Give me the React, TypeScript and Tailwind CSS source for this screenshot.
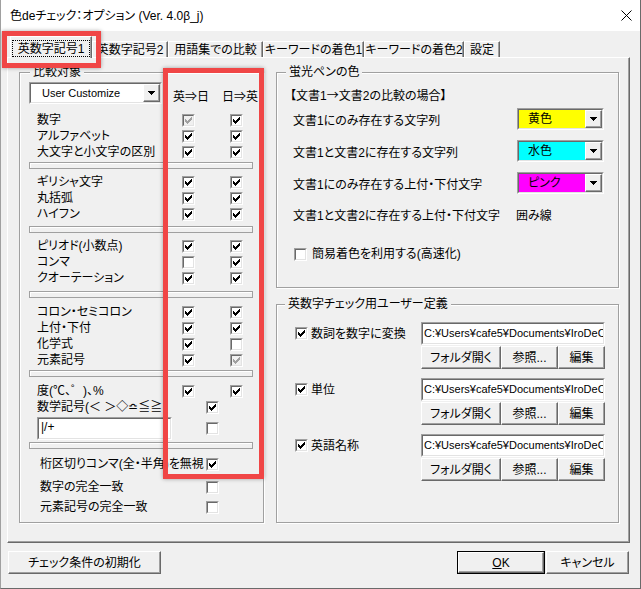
import React from "react";

type CS = "on" | "off" | "dis";

const CHECK_TOPS = [2, 3, 4, 3, 2, 1, 0];

function Check({ s }: { s: CS }) {
  return (
    <span className="inline-flex shrink-0 w-[13px] h-[13px] border border-t-[#a0a0a0] border-l-[#a0a0a0] border-r-white border-b-white">
      <span
        className={`flex flex-1 items-center justify-center border border-t-[#696969] border-l-[#696969] border-r-[#e3e3e3] border-b-[#e3e3e3] ${
          s === "dis" ? "bg-[#f0f0f0]" : "bg-white"
        }`}
      >
        {s !== "off" && (
          <svg width="7" height="7" viewBox="0 0 7 7" shapeRendering="crispEdges">
            {CHECK_TOPS.map((t, i) => (
              <rect key={i} x={i} y={t} width="1" height="3" fill={s === "dis" ? "#a0a0a0" : "#000"} />
            ))}
          </svg>
        )}
      </span>
    </span>
  );
}

function DropBtn() {
  return (
    <div className="w-[17px] flex items-center justify-center border border-t-white border-l-white border-r-[#696969] border-b-[#696969] shadow-[inset_-1px_-1px_0_#a0a0a0] bg-[#f0f0f0]">
      <svg width="7" height="4" viewBox="0 0 7 4" shapeRendering="crispEdges">
        <rect x="0" y="0" width="7" height="1" fill="#000" />
        <rect x="1" y="1" width="5" height="1" fill="#000" />
        <rect x="2" y="2" width="3" height="1" fill="#000" />
        <rect x="3" y="3" width="1" height="1" fill="#000" />
      </svg>
    </div>
  );
}

function Combo({ className, fill, pad, children }: { className: string; fill: string; pad: string; children: React.ReactNode }) {
  return (
    <div className={`flex h-[22px] border border-t-[#a0a0a0] border-l-[#a0a0a0] border-r-white border-b-white ${className}`}>
      <div className="flex flex-1 border border-t-[#696969] border-l-[#696969] border-r-[#e3e3e3] border-b-[#e3e3e3] bg-white">
        <div className={`flex-1 flex items-center whitespace-nowrap overflow-hidden ${pad} ${fill}`}>{children}</div>
        <DropBtn />
      </div>
    </div>
  );
}

function Field({ className, inner, children }: { className: string; inner: string; children: React.ReactNode }) {
  return (
    <div className={`border border-t-[#a0a0a0] border-l-[#a0a0a0] border-r-white border-b-white ${className}`}>
      <div
        className={`h-full border border-t-[#696969] border-l-[#696969] border-r-[#e3e3e3] border-b-[#e3e3e3] bg-white flex overflow-hidden whitespace-nowrap ${inner}`}
      >
        {children}
      </div>
    </div>
  );
}

function Btn({ className, children }: { className: string; children: React.ReactNode }) {
  return (
    <div
      className={`flex items-center justify-center h-[23px] border border-t-white border-l-white border-r-[#696969] border-b-[#696969] shadow-[inset_-1px_-1px_0_#a0a0a0] bg-[#f0f0f0] ${className}`}
    >
      {children}
    </div>
  );
}

function Group({ title, className, titleMl, children }: { title: string; className: string; titleMl: string; children: React.ReactNode }) {
  return (
    <div className={`flex flex-col shrink-0 border border-[#a0a0a0] shadow-[inset_1px_1px_0_#fff,1px_1px_0_#fff] ${className}`}>
      <div className={`-mt-[8px] ${titleMl} px-[3px] w-fit h-[14px] leading-[14px] bg-[#f0f0f0] whitespace-nowrap`}>{title}</div>
      {children}
    </div>
  );
}

function Sep({ mt }: { mt: string }) {
  return <div className={`ml-[9px] w-[224px] h-[7px] border border-[#a0a0a0] shadow-[inset_1px_1px_0_#fff] ${mt}`} />;
}

function Row2({ label, a, b, mt }: { label: string; a: CS; b: CS; mt: string }) {
  return (
    <div className={`flex items-center h-[16px] ${mt}`}>
      <span className="w-[162px] pl-[17px] leading-[14px] whitespace-nowrap overflow-hidden">{label}</span>
      <Check s={a} />
      <span className="ml-[35px] flex">
        <Check s={b} />
      </span>
    </div>
  );
}

function RowMid({ label, s, mt, pl, clip }: { label: string; s: CS; mt: string; pl: string; clip?: boolean }) {
  return (
    <div className={`flex items-center h-[16px] ${mt}`}>
      <span className={`w-[186px] ${pl} leading-[14px] whitespace-nowrap overflow-hidden`}>
        {clip ? <span className="block w-[126px] overflow-hidden">{label}</span> : label}
      </span>
      <Check s={s} />
    </div>
  );
}

function ColorRow({ label, fill, text, mt }: { label: string; fill: string; text: string; mt: string }) {
  return (
    <div className={`flex items-center h-[22px] ${mt}`}>
      <span className="w-[240px] pl-[16px] pt-[4px] leading-[14px] whitespace-nowrap">{label}</span>
      <Combo className="w-[87px]" fill={fill} pad="pl-[9px]">
        {text}
      </Combo>
    </div>
  );
}

function UserDef({ label, mt }: { label: string; mt: string }) {
  return (
    <div className={`flex ${mt}`}>
      <div className="w-[144px] h-[23px] flex items-center pl-[18px]">
        <Check s="on" />
        <span className="ml-[3px] leading-[14px] whitespace-nowrap">{label}</span>
      </div>
      <div className="w-[184px] flex flex-col">
        <Field className="h-[23px]" inner="items-center pl-[1px] text-[11px]">
          C:¥Users¥cafe5¥Documents¥IroDeCheck¥UserDefine¥
        </Field>
        <div className="flex mt-[1px]">
          <Btn className="w-[80px]">フォルダ開く</Btn>
          <Btn className="w-[57px]">参照...</Btn>
          <Btn className="w-[47px]">編集</Btn>
        </div>
      </div>
    </div>
  );
}

export default function App() {
  return (
    <div className="relative w-[641px] h-[589px] overflow-hidden bg-[#f0f0f0] border-l border-r border-b border-l-[#a0a0a0] border-r-[#6a6a6a] border-b-[#6a6a6a] flex flex-col text-black text-[12px] font-['Liberation_Sans','Noto_Sans_CJK_JP',sans-serif] [font-feature-settings:'palt']">
      {/* title bar */}
      <div className="h-[31px] shrink-0 bg-white flex items-center pl-[9px] pr-[8px]">
        <span className="leading-[16px] whitespace-nowrap">色deチェック：オプション (Ver. 4.0β_j)</span>
        <svg className="ml-auto" width="11" height="11" viewBox="0 0 11 11">
          <path d="M0.5 0.5L10.5 10.5M10.5 0.5L0.5 10.5" stroke="#000" strokeWidth="1" />
        </svg>
      </div>

      {/* tabs */}
      <div className="flex items-end h-[21px] mt-[5px] pl-[9px] shrink-0">
        <div className="relative z-10 -mb-px h-[22px] w-[82px] bg-[#f0f0f0] border-t border-l border-r border-t-white border-l-white border-r-[#696969] shadow-[inset_-1px_0_0_#a0a0a0] flex justify-center pt-[3px]">
          <div className="w-[78px] h-[17px] border border-dotted border-black flex items-center justify-center leading-[14px] whitespace-nowrap">
            英数字記号1
          </div>
        </div>
        <div className="h-[16px] w-[76px] border-t border-l border-r border-t-white border-l-white border-r-[#696969] shadow-[inset_-1px_0_0_#a0a0a0] flex items-center justify-center leading-[14px] whitespace-nowrap">
          英数字記号2
        </div>
        <div className="h-[16px] w-[95px] border-t border-l border-r border-t-white border-l-white border-r-[#696969] shadow-[inset_-1px_0_0_#a0a0a0] flex items-center justify-center leading-[14px] whitespace-nowrap">
          用語集での比較
        </div>
        <div className="h-[16px] w-[101px] border-t border-l border-r border-t-white border-l-white border-r-[#696969] shadow-[inset_-1px_0_0_#a0a0a0] flex items-center justify-center leading-[14px] whitespace-nowrap">
          キーワードの着色1
        </div>
        <div className="h-[16px] w-[100px] border-t border-l border-r border-t-white border-l-white border-r-[#696969] shadow-[inset_-1px_0_0_#a0a0a0] flex items-center justify-center leading-[14px] whitespace-nowrap">
          キーワードの着色2
        </div>
        <div className="h-[16px] w-[36px] border-t border-l border-r border-t-white border-l-white border-r-[#696969] shadow-[inset_-1px_0_0_#a0a0a0] flex items-center justify-center leading-[14px] whitespace-nowrap">
          設定
        </div>
      </div>

      {/* panel */}
      <div className="ml-[6px] w-[623px] h-[486px] shrink-0 border border-t-white border-l-white border-r-[#696969] border-b-[#696969] shadow-[inset_-1px_-1px_0_#a0a0a0] flex items-start pt-[14px] pl-[11px]">
        {/* left group */}
        <Group title="比較対象" className="w-[245px] h-[451px]" titleMl="ml-[10px]">
          <div className="flex items-end h-[22px] mt-[3px]">
            <div className="ml-[9px]">
              <Combo className="w-[133px]" fill="bg-white" pad="pl-[11px] text-[11px]">
                User Customize
              </Combo>
            </div>
            <span className="ml-[11px] leading-[14px] whitespace-nowrap">英⇒日</span>
            <span className="ml-[13px] leading-[14px] whitespace-nowrap">日⇒英</span>
          </div>

          <Row2 label="数字" a="dis" b="on" mt="mt-[8px]" />
          <Row2 label="アルファベット" a="on" b="on" mt="" />
          <Row2 label="大文字と小文字の区別" a="on" b="on" mt="" />
          <Sep mt="mt-[2px]" />
          <Row2 label="ギリシャ文字" a="on" b="on" mt="mt-[5px]" />
          <Row2 label="丸括弧" a="on" b="on" mt="" />
          <Row2 label="ハイフン" a="on" b="on" mt="" />
          <Sep mt="mt-[4px]" />
          <Row2 label="ピリオド(小数点)" a="on" b="on" mt="mt-[5px]" />
          <Row2 label="コンマ" a="off" b="on" mt="" />
          <Row2 label="クオーテーション" a="on" b="on" mt="" />
          <Sep mt="mt-[5px]" />
          <Row2 label="コロン・セミコロン" a="on" b="on" mt="mt-[6px]" />
          <Row2 label="上付・下付" a="on" b="on" mt="" />
          <Row2 label="化学式" a="on" b="off" mt="" />
          <Row2 label="元素記号" a="on" b="dis" mt="" />
          <Sep mt="mt-[2px]" />
          <Row2 label="度(℃、゜)、%" a="on" b="on" mt="mt-[6px]" />
          <RowMid label="数学記号(＜ ＞◇≏≦≧" s="on" mt="" pl="pl-[17px]" clip />
          <div className="flex items-center mt-[2px] h-[23px]">
            <Field className="ml-[17px] w-[135px] h-[23px]" inner="items-center pl-[2px] pb-[3px]">
              |/+
            </Field>
            <span className="ml-[34px] flex">
              <Check s="off" />
            </span>
          </div>
          <Sep mt="mt-[2px]" />
          <RowMid label="桁区切りコンマ(全・半角)を無視" s="on" mt="mt-[7px]" pl="pl-[20px]" />
          <RowMid label="数字の完全一致" s="off" mt="mt-[7px]" pl="pl-[20px]" />
          <RowMid label="元素記号の完全一致" s="off" mt="mt-[4px]" pl="pl-[20px]" />
        </Group>

        {/* right column */}
        <div className="ml-[12px] flex flex-col">
          <Group title="蛍光ペンの色" className="w-[343px] h-[216px]" titleMl="ml-[9px]">
            <div className="mt-[9px] pl-[13px] leading-[14px] whitespace-nowrap">
              【文書1<span className="font-['Noto_Sans_CJK_JP']">→</span>文書2の比較の場合】
            </div>
            <ColorRow label="文書1にのみ存在する文字列" fill="bg-[#ffff00]" text="黄色" mt="mt-[5px]" />
            <ColorRow label="文書1と文書2に存在する文字列" fill="bg-[#00ffff]" text="水色" mt="mt-[10px]" />
            <ColorRow label="文書1にのみ存在する上付・下付文字" fill="bg-[#ff00ff]" text="ピンク" mt="mt-[10px]" />
            <div className="flex items-center h-[22px] mt-[11px]">
              <span className="w-[239px] pl-[16px] leading-[14px] whitespace-nowrap">文書1と文書2に存在する上付・下付文字</span>
              <span className="leading-[14px]">囲み線</span>
            </div>
            <div className="flex items-center h-[14px] mt-[20px] pl-[17px]">
              <Check s="off" />
              <span className="ml-[5px] leading-[14px] whitespace-nowrap">簡易着色を利用する(高速化)</span>
            </div>
          </Group>

          <Group title="英数字チェック用ユーザー定義" className="mt-[16px] w-[343px] h-[219px]" titleMl="ml-[8px]">
            <UserDef label="数詞を数字に変換" mt="mt-[11px]" />
            <UserDef label="単位" mt="mt-[9px]" />
            <UserDef label="英語名称" mt="mt-[9px]" />
          </Group>
        </div>
      </div>

      {/* bottom buttons */}
      <div className="flex mt-[8px] shrink-0 pr-[11px]">
        <Btn className="ml-[7px] w-[153px]">チェック条件の初期化</Btn>
        <div className="ml-auto w-[88px] h-[23px] border border-black flex">
          <Btn className="flex-1 h-full">
            <span>
              <span className="underline">O</span>K
            </span>
          </Btn>
        </div>
        <Btn className="ml-[1px] w-[83px]">キャンセル</Btn>
      </div>

      {/* red highlight overlays */}
      <div className="absolute left-[1px] top-[31px] w-[99px] h-[37px] border-[5px] border-[#f04646] shadow-[0_0_4px_rgba(0,0,0,0.35)] pointer-events-none" />
      <div className="absolute left-[162px] top-[68px] w-[101px] h-[411px] border-[5px] border-[#f04646] shadow-[0_0_4px_rgba(0,0,0,0.35)] pointer-events-none" />
    </div>
  );
}
